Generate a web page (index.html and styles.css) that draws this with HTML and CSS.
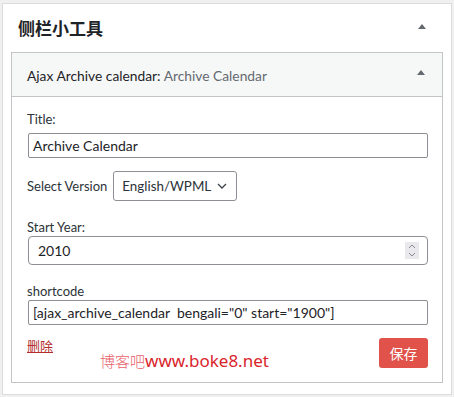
FILE: index.html
```html
<!DOCTYPE html>
<html lang="zh">
<head>
<meta charset="utf-8">
<title>侧栏小工具</title>
<link rel="stylesheet" href="styles.css">
</head>
<body>
<div class="panel">
  <div class="panel-head">
    <h2 class="panel-title">侧栏小工具</h2>
    <span class="tri"></span>
  </div>
  <div class="widget">
    <div class="widget-top">
      <h3 class="widget-title">Ajax Archive calendar<span class="colon">:</span> <span class="in-title">Archive Calendar</span></h3>
      <span class="tri tri-top"></span>
    </div>
    <div class="widget-body">
      <div class="label">Title:</div>
      <div class="field field-text">Archive Calendar</div>
      <div class="row-select">
        <span class="label">Select Version</span>
        <div class="select">English/WPML
          <svg class="chev" width="10" height="6" viewBox="0 0 10 6"><path d="M1 1 L5 5 L9 1" fill="none" stroke="#3c434a" stroke-width="1.3"/></svg>
        </div>
      </div>
      <div class="label label-year">Start Year:</div>
      <div class="field field-num">2010
        <span class="spin">
          <svg width="14" height="17" viewBox="0 0 14 17"><path d="M4 6 L7 3 L10 6" fill="none" stroke="#8a8a92" stroke-width="1"/><path d="M4 11 L7 14 L10 11" fill="none" stroke="#8a8a92" stroke-width="1"/></svg>
        </span>
      </div>
      <div class="label label-code">shortcode</div>
      <div class="field field-text">[ajax_archive_calendar&nbsp; bengali="0" start="1900"]</div>
      <div class="actions">
        <a class="delete" href="#">删除</a>
        <span class="save">保存</span>
      </div>
    </div>
  </div>
  <div class="watermark"><span class="wm-cjk">博客吧</span>www.boke8.net</div>
</div>
</body>
</html>
```

FILE: styles.css
```css
html, body {
  margin: 0;
  padding: 0;
}
body {
  background: #f0f0f1;
  font-family: Lato, "Noto Sans", "Noto Sans CJK SC", sans-serif;
  color: #1d2327;
  width: 454px;
  height: 397px;
  overflow: hidden;
}
.panel {
  position: relative;
  box-sizing: border-box;
  margin: 3px 0 0 2px;
  width: 450px;
  height: 392px;
  background: #fff;
  border: 1px solid #dcdcde;
  padding: 0 8px 0 8px;
}
.panel-head {
  height: 48px;
  display: flex;
  align-items: center;
  justify-content: space-between;
  padding: 0 17px 0 7px;
}
.panel-title {
  margin: 0;
  font-family: "Noto Sans CJK SC", sans-serif;
  font-size: 17px;
  font-weight: 700;
  color: #1d2327;
  line-height: 24px;
}
.tri {
  width: 0;
  height: 0;
  border-left: 4px solid transparent;
  border-right: 4px solid transparent;
  border-bottom: 5px solid #646970;
  margin-bottom: 3px;
}
.widget {
  border: 1px solid #c3c4c7;
  width: 432px;
  box-sizing: border-box;
}
.widget-top {
  height: 43px;
  background: #f6f7f7;
  border-bottom: 1px solid #c3c4c7;
  display: flex;
  align-items: center;
  justify-content: space-between;
  padding: 0 17px 0 15px;
}
.widget-title {
  margin: 3px 0 0 0;
  font-size: 13.8px;
  font-weight: 400;
  color: #1d2327;
  line-height: 18px;
}
.in-title {
  color: #646970;
}
.tri-top {
  margin-bottom: 4px;
}
.widget-body {
  padding: 13px 13px 14px 15px;
  font-size: 13px;
}
.label {
  line-height: 18px;
  font-size: 13px;
  color: #2c3338;
}
.field {
  box-sizing: border-box;
  margin-left: 1px;
  width: 400px;
  border: 1px solid #8c8f94;
  border-radius: 2px;
  color: #1d2327;
  font-size: 14px;
  display: flex;
  align-items: center;
}
.field-text {
  height: 25px;
  padding: 0 4px;
  margin-top: 5px;
}
.field-text + .actions {
  margin-top: 13px;
}
.row-select {
  margin-top: 13px;
  display: flex;
  align-items: center;
  gap: 6px;
}
.select {
  box-sizing: border-box;
  height: 30px;
  border: 1px solid #8c8f94;
  border-radius: 3px;
  padding: 0 9px 0 8px;
  display: flex;
  align-items: center;
  gap: 6px;
  font-size: 13.4px;
  color: #2c3338;
}
.label-year {
  margin-top: 17px;
}
.field-num {
  height: 29px;
  border-radius: 4px;
  padding: 0 8px 0 9px;
  justify-content: space-between;
}
.spin {
  display: flex;
  width: 14px;
  height: 17px;
  background: #e9e9ed;
}
.label-code {
  margin-top: 17px;
}
.label-code + .field-text {
  margin-top: 0;
}
.actions {
  display: flex;
  justify-content: space-between;
  align-items: flex-start;
  padding-right: 1px;
}
.delete {
  color: #b32d2e;
  font-family: "Noto Sans CJK SC", sans-serif;
  font-size: 13px;
  line-height: 16px;
  text-decoration: underline;
}
.save {
  box-sizing: border-box;
  height: 30px;
  width: 49px;
  background: #e0524a;
  border-radius: 3px;
  color: #fff;
  font-family: "Noto Sans CJK SC", sans-serif;
  font-size: 14px;
  display: flex;
  align-items: center;
  justify-content: center;
}
.watermark {
  position: absolute;
  left: 97px;
  top: 347px;
  font-family: "Noto Sans", "Noto Sans CJK SC", sans-serif;
  font-size: 17px;
  line-height: 20px;
  color: #d9242c;
}
.wm-cjk {
  font-family: "Noto Sans CJK SC", sans-serif;
  font-size: 15px;
  font-weight: 300;
  color: #e8606a;
}
```
